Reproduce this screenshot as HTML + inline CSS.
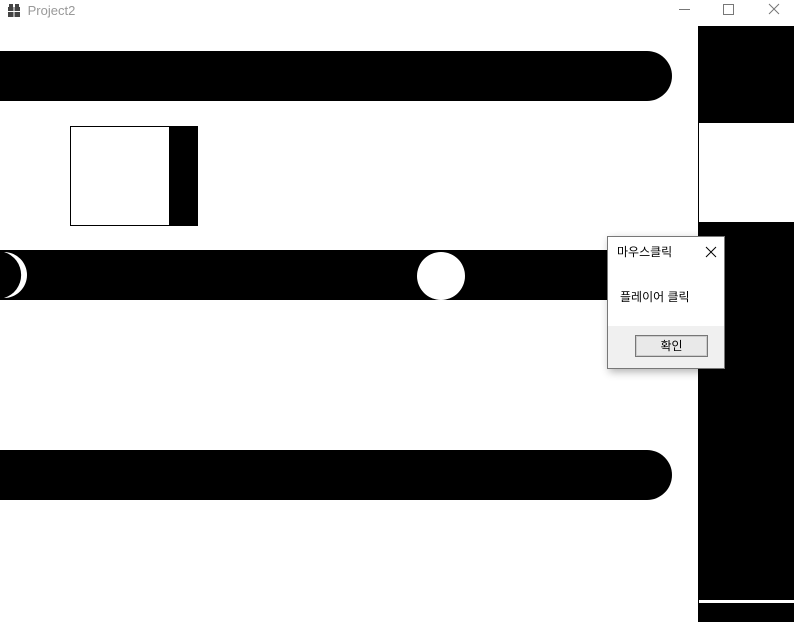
<!DOCTYPE html>
<html><head><style>
body{margin:0;width:794px;height:622px;background:#fff;position:relative;overflow:hidden;font-family:"Liberation Sans","Noto Sans CJK KR",sans-serif}
.a{position:absolute}
</style></head><body>
<div class="a" style="left:8px;top:3px;font-size:13px;color:#999">
<svg width="12" height="13" style="vertical-align:-2px"><rect x="0" y="3" width="12" height="10" fill="#444"/><rect x="1" y="0" width="4" height="3" fill="#444"/><rect x="7" y="0" width="4" height="3" fill="#444"/><rect x="0" y="7" width="12" height="1" fill="#fff"/><rect x="5.5" y="3" width="1" height="10" fill="#fff"/></svg>
<span style="margin-left:4px">Project2</span></div>
<div class="a" style="left:679px;top:9px;width:11px;height:1px;background:#777"></div>
<div class="a" style="left:723px;top:4px;width:9px;height:9px;border:1px solid #777"></div>
<svg class="a" style="left:768px;top:3px" width="12" height="12"><path d="M1 1L11 11M11 1L1 11" stroke="#777"/></svg>
<div class="a" style="left:0;top:51px;width:672px;height:50px;background:#000;border-radius:0 25px 25px 0"></div>
<div class="a" style="left:0;top:450px;width:672px;height:50px;background:#000;border-radius:0 25px 25px 0"></div>
<div class="a" style="left:0;top:250px;width:620px;height:50px;background:#000"></div>
<div class="a" style="left:417px;top:252px;width:48px;height:48px;border-radius:50%;background:#fff"></div>
<svg class="a" style="left:0;top:250px" width="40" height="50"><path d="M4 2 A23 23 0 0 1 4 48 A24 24 0 0 0 4 2Z" fill="#fff"/></svg>
<div class="a" style="left:70px;top:126px;width:126px;height:98px;border:1px solid #000;background:#fff"></div>
<div class="a" style="left:169px;top:126px;width:29px;height:100px;background:#000"></div>
<div class="a" style="left:698px;top:26px;width:96px;height:97px;background:#000"></div>
<div class="a" style="left:698px;top:123px;width:1px;height:100px;background:#000"></div>
<div class="a" style="left:698px;top:222px;width:96px;height:400px;background:#000"></div>
<div class="a" style="left:699px;top:600px;width:95px;height:3px;background:#fff"></div>
<div class="a" style="left:607px;top:236px;width:116px;height:131px;border:1px solid #777;background:#fff;box-shadow:2px 3px 8px rgba(0,0,0,.3)">
<div class="a" style="left:9px;top:6px;font-size:12px;color:#000">마우스클릭</div>
<svg class="a" style="left:97px;top:9px" width="12" height="12"><path d="M1 1L11 11M11 1L1 11" stroke="#000"/></svg>
<div class="a" style="left:12px;top:51px;font-size:12px;color:#000">플레이어 클릭</div>
<div class="a" style="left:0;top:89px;width:116px;height:42px;background:#f0f0f0"></div>
<div class="a" style="left:27px;top:98px;width:71px;height:20px;border:1px solid #777;box-shadow:inset 0 0 0 1px #ccc;background:#e9e9e9;font-size:12px;text-align:center;line-height:20px">확인</div>
</div>
</body></html>
